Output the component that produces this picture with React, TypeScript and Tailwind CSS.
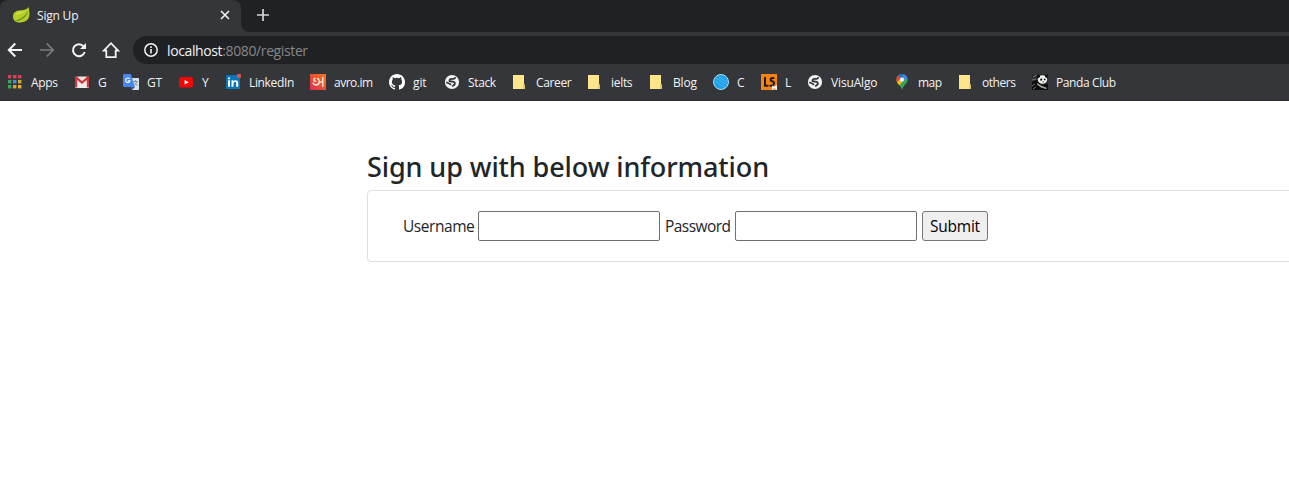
import type { ReactNode } from "react";

const Apps = () => (
  <svg width="16" height="16" viewBox="0 0 16 16">
    {["#d8404f", "#e0405a", "#d8404f", "#3aa35c", "#3f8ce8", "#d9a62e", "#3aa35c", "#d9a62e", "#e3b23a"].map((c, i) => (
      <rect key={i} x={1 + (i % 3) * 5} y={1 + Math.floor(i / 3) * 5} width="3.4" height="3.4" fill={c} />
    ))}
  </svg>
);

const Gmail = () => (
  <svg width="16" height="16" viewBox="0 0 16 16">
    <path d="M1 3h14v11H1z" fill="#f0eded" />
    <path d="M1 3.2C1 2.5 1.6 2 2.3 2L8 7l5.700-5C14.500 2 15 2.500 15 3.200V13.500H12.800V6L8 10 3.200 6V13.500H1z" fill="#d0393a" />
    <path d="M3 2.500h10L8 7z" fill="#f4dedc" />
  </svg>
);

const Translate = () => (
  <svg width="16" height="16" viewBox="0 0 16 16">
    <path d="M7 4h8.200q.8 0 .8.800V15q0 1-.8 1H9z" fill="#dce1e6" />
    <path d="M10 7.500h5M12.500 6v1.500M14 7.500q-1 3-3 4M11.500 8.500l3 3.500" stroke="#78909c" strokeWidth=".9" fill="none" />
    <path d="M8.500 13h3.500l-3 3z" fill="#2957b8" />
    <path d="M1 0h7l3.800 13H1q-1 0-1-1V1q0-1 1-1z" fill="#4686ef" />
    <path d="M6.700 5A2.200 2.200 0 1 0 7 6.700H4.800" stroke="#fff" strokeWidth="1.1" fill="none" />
  </svg>
);

const Youtube = () => (
  <svg width="16" height="16" viewBox="0 0 16 16">
    <rect x="1" y="3" width="14" height="10.500" rx="2.300" fill="#f50505" />
    <path d="M6.600 6v4.500l4-2.250z" fill="#fff" />
  </svg>
);

const LinkedIn = () => (
  <svg width="17" height="16" viewBox="0 0 17 16">
    <rect x="1" y="1" width="14" height="14" rx=".5" fill="#0877b5" />
    <path d="M3 6.300h2v6.500H3zM3 3.500h2v1.800H3zM6.500 6.300h2v1q2-2 4-.5.700.700.700 2v4h-2v-3.500q0-1.600-1.200-1.600T8.500 9.400v3.400h-2z" fill="#fff" />
    <rect x="12" y="0" width="4" height="4" rx=".8" fill="#d6564d" />
  </svg>
);

const Avro = () => (
  <svg width="16" height="16" viewBox="0 0 16 16">
    <defs>
      <linearGradient id="avro" x1="0" y1="1" x2="1" y2="0">
        <stop offset="0" stopColor="#d92b58" />
        <stop offset=".6" stopColor="#ee5a2c" />
        <stop offset="1" stopColor="#ee7a25" />
      </linearGradient>
    </defs>
    <path d="M0 0h16v16H0z" fill="url(#avro)" />
    <path d="M5.500 4.200Q3.300 5 4 6.800 5 7.800 6 6.800M2.800 8.800Q4 11.500 7 10.800 9.600 10 9.300 7 9 4.600 7 4.300M9.500 8.500q1.500-1 3.200-.8M12.800 3.300v9.400" fill="none" stroke="#fbeae4" strokeWidth="1.400" />
  </svg>
);

const Github = () => (
  <svg width="16" height="16" viewBox="0 0 16 16" fill="#fff">
    <path d="M8 0C3.580 0 0 3.580 0 8c0 3.540 2.290 6.530 5.470 7.590.400.070.550-.170.550-.380 0-.190-.010-.820-.010-1.490-2.010.370-2.530-.490-2.690-.940-.090-.230-.480-.940-.820-1.130-.280-.150-.680-.520-.010-.530.630-.010 1.080.580 1.230.820.720 1.210 1.870.870 2.330.660.070-.520.280-.870.510-1.070-1.780-.200-3.640-.890-3.640-3.950 0-.870.310-1.590.820-2.150-.080-.200-.360-1.020.080-2.120 0 0 .670-.210 2.200.820a7.600 7.600 0 0 1 4 0c1.530-1.040 2.200-.820 2.200-.820.440 1.100.160 1.920.080 2.120.510.560.820 1.270.820 2.150 0 3.070-1.870 3.750-3.650 3.950.290.250.540.730.540 1.480 0 1.070-.010 1.930-.010 2.200 0 .210.150.460.550.380A8 8 0 0 0 16 8c0-4.420-3.580-8-8-8z" />
  </svg>
);

const Globe = () => (
  <svg width="16" height="16" viewBox="0 0 16 16">
    <circle cx="8" cy="8" r="7.100" fill="#f1f3f4" />
    <path d="M11 3.200Q11.300 4.800 9.200 4.900H7.300Q5 5.500 5.600 7.100L9.600 7.900Q11.800 9 10.300 10.800L8.200 12.400" fill="none" stroke="#35363a" strokeWidth="1.800" />
    <path d="M2.200 8.300l3.800 1.600 1 1.100" fill="none" stroke="#35363a" strokeWidth="1.600" />
  </svg>
);

const Folder = () => (
  <svg width="16" height="16" viewBox="0 0 16 16">
    <path d="M1 1h11v9.500l1 1V15H1z" fill="#fde58c" />
    <path d="M12 9.500l1 2V15h-2v-3.500z" fill="#e9c767" />
  </svg>
);

const BlueBall = () => (
  <svg width="16" height="16" viewBox="0 0 16 16">
    <circle cx="8" cy="8" r="7.500" fill="#1fa2ea" stroke="#a4dcf5" strokeWidth="1" />
    <path d="M2 7l10 6.500M3 4l11 7M6 3l8 5" stroke="#55bdf1" strokeWidth=".8" />
  </svg>
);

const LightShot = () => (
  <svg width="16" height="16" viewBox="0 0 16 16">
    <path d="M0 0h16v16H0z" fill="#f68212" />
    <path d="M4 3v8.800h3.500M13.300 4h-1.700Q9.600 4 9.600 5.600T11.500 7.500 13 9.500 11 11.800H8.600" fill="none" stroke="#201b18" strokeWidth="2" />
    <path d="M11 16v-4.500l2 1.300 3-1.800v5h-1.500v-1.500h-2V16z" fill="#f4f4f4" />
  </svg>
);

const MapPin = () => (
  <svg width="16" height="16" viewBox="0 0 16 16">
    <defs>
      <clipPath id="pin">
        <path d="M8 0a5.700 5.700 0 0 1 5.700 5.700C13.700 9.500 9.300 11 8 16 6.700 11 2.300 9.500 2.300 5.700A5.700 5.700 0 0 1 8 0z" />
      </clipPath>
    </defs>
    <g clipPath="url(#pin)">
      <path d="M0 0h16v16H0z" fill="#34a853" />
      <path d="M9 0h6v3L8 8z" fill="#4285f4" />
      <path d="M3 1.500L6 0h4.500L6 5z" fill="#1a73e8" />
      <path d="M2 2l2-1 3 3-5 6z" fill="#ea4335" />
      <path d="M2.500 8.800L6 5.500l2 2.700-4 4.800z" fill="#fbbc04" />
    </g>
    <circle cx="8" cy="5.700" r="2.100" fill="#f0f3f6" />
  </svg>
);

const Panda = () => (
  <svg width="16" height="16" viewBox="0 0 16 16">
    <path d="M0 0h16v16H0z" fill="#2a2b2d" />
    <path d="M0 8l5-2 4 5 7-1v6H0z" fill="#0d0d0e" />
    <path d="M1 3l4-2M0 6l4-1M0 12l3-2M1 15l3-2" stroke="#77797a" strokeWidth="1" />
    <path d="M5 9l4 2.500 6 2.500-1 1-5-1.500-4-3z" fill="#a5a6a7" />
    <ellipse cx="10.500" cy="5.500" rx="4.700" ry="4.300" fill="#eeeeec" />
    <circle cx="6.300" cy="2.300" r="1.600" fill="#080808" />
    <circle cx="14.400" cy="2.300" r="1.400" fill="#080808" />
    <path d="M8 5l2-.7.300 1.500-1.600 1.500zM12 4.500l1.700.5-.6 1.600-1.300-.8zM10.300 7.500h1.700l-.9 1.200z" fill="#151515" />
  </svg>
);

const bookmarks: { label: string; icon: ReactNode; width: string; text: string }[] = [
  { label: "Apps", icon: <Apps />, width: "w-[67px]", text: "tracking-[-0.3px]" },
  { label: "G", icon: <Gmail />, width: "w-[49px]", text: "" },
  { label: "GT", icon: <Translate />, width: "w-[55px]", text: "tracking-[-0.3px]" },
  { label: "Y", icon: <Youtube />, width: "w-[47px]", text: "" },
  { label: "LinkedIn", icon: <LinkedIn />, width: "w-[85px]", text: "tracking-[-0.35px]" },
  { label: "avro.im", icon: <Avro />, width: "w-[79px]", text: "tracking-[-0.5px]" },
  { label: "git", icon: <Github />, width: "w-[55px]", text: "tracking-[-0.1px]" },
  { label: "Stack", icon: <Globe />, width: "w-[68px]", text: "tracking-[-0.35px]" },
  { label: "Career", icon: <Folder />, width: "w-[75px]", text: "tracking-[-0.35px]" },
  { label: "ielts", icon: <Folder />, width: "w-[62px]", text: "tracking-[-0.3px]" },
  { label: "Blog", icon: <Folder />, width: "w-[64px]", text: "tracking-[-0.2px]" },
  { label: "C", icon: <BlueBall />, width: "w-[48px]", text: "" },
  { label: "L", icon: <LightShot />, width: "w-[46px]", text: "" },
  { label: "VisuAlgo", icon: <Globe />, width: "w-[87px]", text: "tracking-[-0.15px]" },
  { label: "map", icon: <MapPin />, width: "w-[64px]", text: "tracking-[-0.5px]" },
  { label: "others", icon: <Folder />, width: "w-[74px]", text: "tracking-[-0.45px]" },
  { label: "Panda Club", icon: <Panda />, width: "w-[100px]", text: "tracking-[-0.4px]" },
];

function TabStrip() {
  return (
    <div className="flex h-8 bg-[#202124]">
      <div className="flex w-[241px] items-center rounded-t-lg bg-[#35363a] pl-[13px] pr-[11px]">
        <svg width="17" height="16" viewBox="0 0 17 16" className="mt-[-2px] shrink-0">
          <path d="M15.500 0Q14 3 8 3.200C2 3.500 0 6 0 9.500 0 14 3 15.500 7 15.500c6.500 0 9.500-4 9.500-8.500 0-3-.3-5-1-7z" fill="#b5cd26" />
          <path d="M1 13.500q9-1 14.500-10-2 8-10 10.500z" fill="#5f9c22" />
          <path d="M2 8q1-3 6-3.300l5-1Q10 7 2 8z" fill="#cfde41" />
        </svg>
        <span className="ml-[7px] pb-[1px] text-[12px] tracking-[-0.2px] text-[#f1f3f4]">Sign Up</span>
        <svg width="10" height="10" viewBox="0 0 10 10" className="mb-[2px] ml-auto" stroke="#f1f3f4" strokeWidth="1.600">
          <path d="M1 1l8 8M9 1L1 9" />
        </svg>
      </div>
      <div className="flex w-2 items-end bg-[#35363a]">
        <div className="h-8 w-2 rounded-bl-lg bg-[#202124]" />
      </div>
      <svg width="12" height="12" viewBox="0 0 12 12" className="ml-2 mt-[9px]" stroke="#d5d6d8" strokeWidth="1.700">
        <path d="M6 0v12M0 6h12" />
      </svg>
    </div>
  );
}

function Toolbar() {
  return (
    <div className="flex h-9 items-center bg-[#35363a] pl-[7px]">
      <svg width="16" height="16" viewBox="0 0 16 16" fill="none" stroke="#f1f3f4" strokeWidth="2">
        <path d="M15 8H2M8.300 1.500L1.800 8l6.500 6.500" />
      </svg>
      <svg width="16" height="16" viewBox="0 0 16 16" className="ml-4" fill="none" stroke="#7c7d80" strokeWidth="1.700">
        <path d="M1 8h13M7.700 1.500L14.200 8l-6.500 6.500" />
      </svg>
      <svg width="16" height="16" viewBox="0 0 16 16" className="ml-4" fill="none">
        <path d="M13.700 10A6 6 0 1 1 12.600 4.300L14 5.800" stroke="#f1f3f4" strokeWidth="2" />
        <path d="M15 1v6H9z" fill="#f1f3f4" />
      </svg>
      <svg width="18" height="18" viewBox="0 0 18 18" className="ml-[15px]" fill="none" stroke="#f1f3f4" strokeWidth="1.800">
        <path d="M1.800 9.600L9 2.200l7.200 7.400h-2.500v6.500H4.300V9.600z" />
      </svg>
      <div className="ml-[13px] flex h-7 flex-1 items-center rounded-l-full bg-[#202124] pl-[11px]">
        <svg width="14" height="14" viewBox="0 0 14 14" className="shrink-0">
          <circle cx="7" cy="7" r="6.200" fill="none" stroke="#f1f3f4" strokeWidth="1.500" />
          <path d="M6.200 6h1.600v4.500H6.200zM6.200 3.300h1.600v1.600H6.200z" fill="#f1f3f4" />
        </svg>
        <span className="ml-[9px] whitespace-nowrap text-[14px] tracking-[-0.38px] text-[#85878a]">
          <span className="text-[#f1f3f4]">localhost</span>:8080/register
        </span>
      </div>
    </div>
  );
}

function BookmarksBar() {
  return (
    <div className="flex h-[33px] border-b border-[#29292c] bg-[#35363a] pb-[4px] pl-[7px]">
      {bookmarks.map(({ label, icon, width, text }) => (
        <div key={label} className={`flex shrink-0 items-center ${width}`}>
          <span className="w-6 shrink-0">{icon}</span>
          <span className={`whitespace-nowrap pt-[1px] text-[12px] leading-4 text-[#f1f3f4] ${text}`}>{label}</span>
        </div>
      ))}
    </div>
  );
}

export default function App() {
  return (
    <div className="h-[494px] overflow-hidden bg-white font-['Open_Sans','Noto_Sans',sans-serif]">
      <TabStrip />
      <Toolbar />
      <BookmarksBar />
      <main className="pl-[367px] pt-[48px] text-[#212529]">
        <h1 className="h-[41px] whitespace-nowrap font-['Noto_Sans','Open_Sans',sans-serif] text-[27px] font-medium leading-[36px] tracking-[-0.1px]">
          Sign up with below information
        </h1>
        <form
          className="flex h-[72px] w-[1110px] items-center rounded-[4px] border border-[#dfdfdf] pl-[35px] text-[15.5px]"
          onSubmit={(e) => e.preventDefault()}
        >
          <label htmlFor="username" className="w-[75px] whitespace-nowrap pt-[2px] tracking-[-0.45px]">Username</label>
          <input id="username" className="h-[30px] w-[182px] rounded-[2px] border border-[#6f6f6f] px-1" />
          <label htmlFor="password" className="ml-[5px] w-[70px] whitespace-nowrap pt-[2px] tracking-[-0.55px]">Password</label>
          <input id="password" type="password" className="h-[30px] w-[182px] rounded-[2px] border border-[#6f6f6f] px-1" />
          <button className="ml-[5px] h-[30px] w-[66px] rounded-[3px] border border-[#767676] bg-[#efefef] pt-[2px] text-[15.5px] tracking-[-0.25px] text-black">Submit</button>
        </form>
      </main>
    </div>
  );
}
